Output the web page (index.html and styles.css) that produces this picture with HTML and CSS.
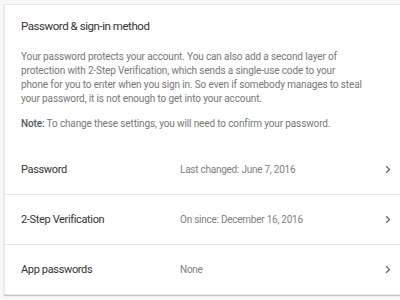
FILE: index.html
```html
<!DOCTYPE html>
<html>
<head>
<meta charset="utf-8">
<link rel="stylesheet" href="styles.css">
</head>
<body>
<div class="card">
  <div class="intro">
    <h1 class="title">Password &amp; sign-in method</h1>
    <p class="desc">Your password protects your account. You can also add a second layer of<br>protection with 2-Step Verification, which sends a single-use code to your<br>phone for you to enter when you sign in. So even if somebody manages to steal<br>your password, it is not enough to get into your account.</p>
    <p class="desc note"><b>Note:</b> To change these settings, you will need to confirm your password.</p>
  </div>
  <div class="row">
    <span class="label">Password</span>
    <span class="value">Last changed: June 7, 2016</span>
    <svg class="chev" width="6" height="9" viewBox="0 0 6 9"><path d="M1.2 1.2 L4.5 4.5 L1.2 7.8" fill="none" stroke="#666" stroke-width="1.3"/></svg>
  </div>
  <div class="row">
    <span class="label">2-Step Verification</span>
    <span class="value">On since: December 16, 2016</span>
    <svg class="chev" width="6" height="9" viewBox="0 0 6 9"><path d="M1.2 1.2 L4.5 4.5 L1.2 7.8" fill="none" stroke="#666" stroke-width="1.3"/></svg>
  </div>
  <div class="row">
    <span class="label">App passwords</span>
    <span class="value">None</span>
    <svg class="chev" width="6" height="9" viewBox="0 0 6 9"><path d="M1.2 1.2 L4.5 4.5 L1.2 7.8" fill="none" stroke="#666" stroke-width="1.3"/></svg>
  </div>
</div>
</body>
</html>
```
FILE: styles.css
```css
html, body {
  margin: 0;
  padding: 0;
  background: #f7f7f7;
  font-family: Roboto, "Liberation Sans", Arial, sans-serif;
  overflow: hidden;
}
body {
  padding: 4px 0 0 4px;
  width: 400px;
  height: 300px;
  box-sizing: border-box;
}
.card {
  width: 420px;
  background: #fff;
  border: 1px solid #e6e6e6;
  box-shadow: 0 1px 1px rgba(0,0,0,0.2);
}
.intro {
  padding: 13px 16px 14px 16px;
}
.title {
  margin: 0 0 16px 0;
  font-size: 11.5px;
  letter-spacing: -0.45px;
  font-weight: 400;
  color: #333;
  line-height: 16px;
}
.desc {
  margin: 0;
  font-size: 10px;
  letter-spacing: -0.13px;
  line-height: 14px;
  color: #777;
  white-space: nowrap;
}
.note {
  margin-top: 11px;
}
.note b {
  font-weight: 500;
  color: #555;
}
.row {
  display: flex;
  align-items: center;
  height: 49px;
  padding: 0 16px;
}
.row + .row {
  border-top: 1px solid #e8e8e8;
}
.label {
  width: 159px;
  font-size: 11px;
  letter-spacing: -0.35px;
  color: #333;
}
.value {
  flex: 1;
  font-size: 10px;
  letter-spacing: -0.25px;
  color: #808080;
}
.chev {
  margin-right: 18px;
}
```
